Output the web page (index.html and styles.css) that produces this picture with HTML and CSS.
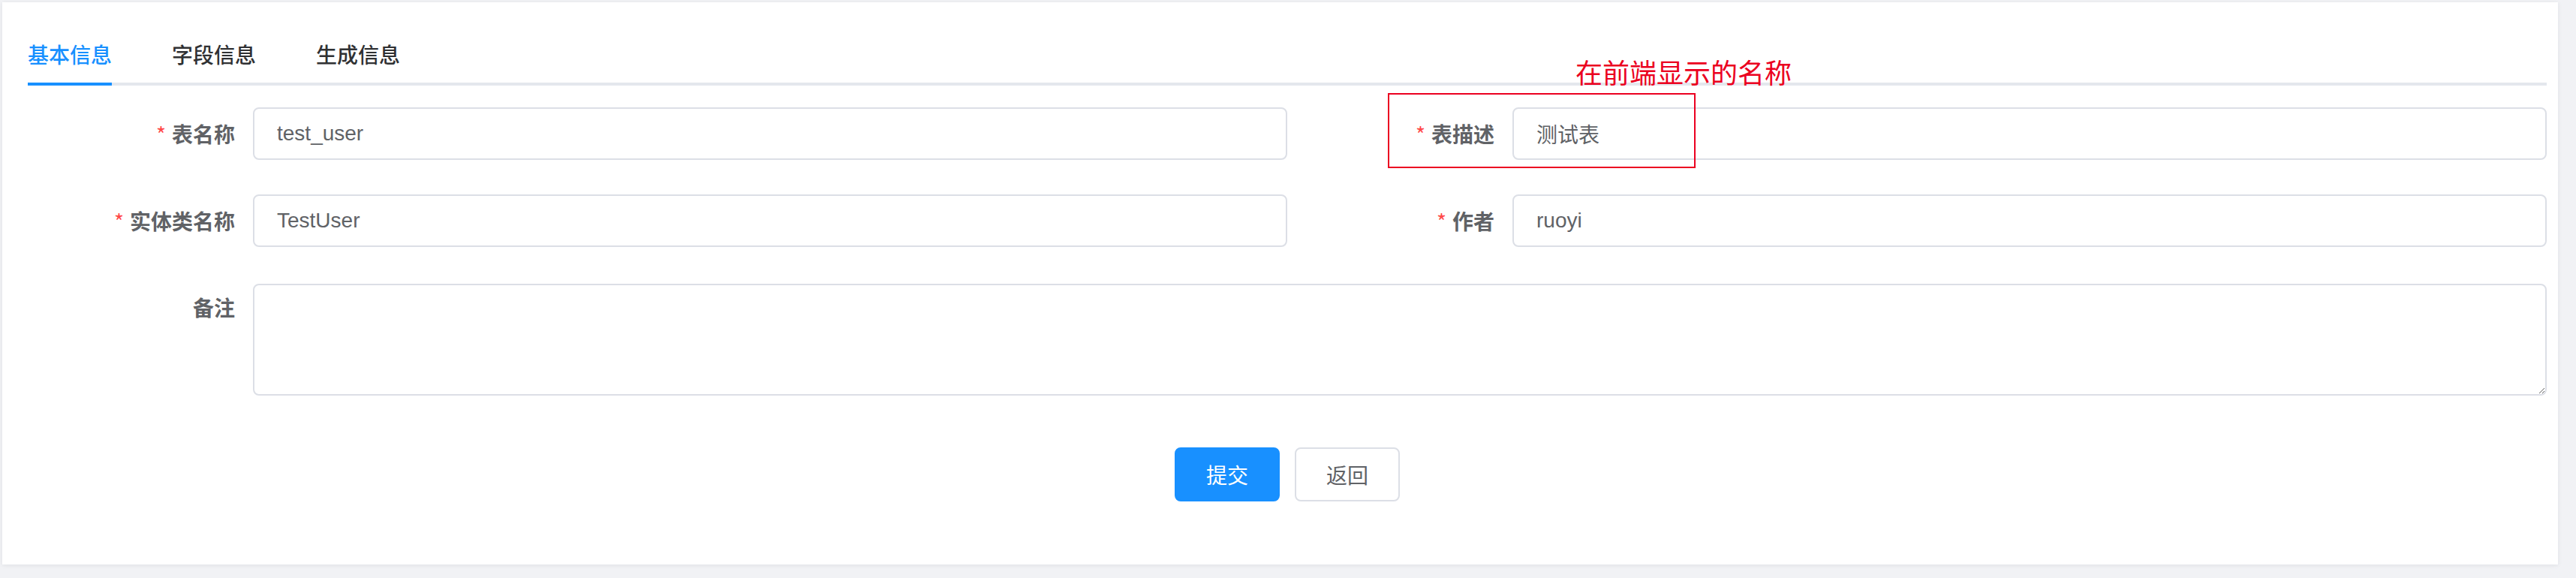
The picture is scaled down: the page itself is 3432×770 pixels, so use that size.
FILE: index.html
```html
<!DOCTYPE html>
<html lang="zh-CN">
<head>
<meta charset="utf-8">
<title>修改生成配置</title>
<link rel="stylesheet" href="styles.css">
</head>
<body>
<div class="page">
  <div class="card">
    <div class="tabs">
      <div class="tab active"><span class="tab-text">基本信息</span></div>
      <div class="tab"><span class="tab-text">字段信息</span></div>
      <div class="tab"><span class="tab-text">生成信息</span></div>
    </div>
    <form class="form">
      <div class="row">
        <div class="item">
          <label class="label"><span class="req">*</span>表名称</label>
          <div class="control"><input class="input" type="text" value="test_user"></div>
        </div>
        <div class="item annotated">
          <label class="label"><span class="req">*</span>表描述</label>
          <div class="control"><input class="input" type="text" value="测试表"></div>
          <div class="note-box"></div>
          <div class="note-text">在前端显示的名称</div>
        </div>
      </div>
      <div class="row">
        <div class="item">
          <label class="label"><span class="req">*</span>实体类名称</label>
          <div class="control"><input class="input" type="text" value="TestUser"></div>
        </div>
        <div class="item">
          <label class="label"><span class="req">*</span>作者</label>
          <div class="control"><input class="input" type="text" value="ruoyi"></div>
        </div>
      </div>
      <div class="item remark">
        <label class="label">备注</label>
        <div class="control"><textarea class="textarea"></textarea></div>
      </div>
    </form>
    <div class="actions">
      <button class="btn primary" type="button">提交</button>
      <button class="btn" type="button">返回</button>
    </div>
  </div>
</div>
</body>
</html>
```
FILE: styles.css
```css
* { box-sizing: border-box; }
html, body {
  margin: 0;
  padding: 0;
  background: #eef0f3;
  font-family: "Liberation Sans", "Noto Sans CJK SC", sans-serif;
}
.page {
  width: 3432px;
  height: 770px;
  padding: 3px 24px 0 3px;
  background: #f1f2f5;
}
.card {
  background: #ffffff;
  width: 3405px;
  height: 749px;
  padding: 31px 15px 0 34px;
  box-shadow: 0 1px 6px rgba(0, 21, 41, 0.08);
}
.tabs {
  display: flex;
  height: 80px;
  border-bottom: 4px solid #e4e7ed;
}
.tab {
  height: 80px;
  padding: 0 40px;
  font-size: 28px;
  font-weight: 500;
  color: #303133;
  font-family: "Noto Sans CJK SC", sans-serif;
  margin-bottom: -4px;
  display: flex;
}
.tab:first-child { padding-left: 0; }
.tab-text {
  display: block;
  height: 80px;
  line-height: 76px;
  border-bottom: 4px solid transparent;
}
.tab.active { color: #1890ff; }
.tab.active .tab-text { border-bottom-color: #1890ff; }
.form {
  margin: 29px 0 0 0;
}
.row {
  display: grid;
  grid-template-columns: 1fr 1fr;
}
.item {
  display: flex;
  align-items: flex-start;
  height: 70px;
  margin-bottom: 46px;
  position: relative;
}
.row + .row .item { margin-bottom: 49px; }
.label {
  display: block;
  width: 300px;
  height: 70px;
  flex: none;
  text-align: right;
  padding-right: 24px;
  line-height: 70px;
  font-size: 28px;
  font-weight: 700;
  color: #606266;
  font-family: "Noto Sans CJK SC", sans-serif;
}
.req {
  color: #ff4949;
  margin-right: 8px;
  font-weight: 400;
  font-family: "Noto Sans CJK SC", sans-serif;
}
.control {
  flex: 1;
  min-width: 0;
}
.input {
  display: block;
  width: 100%;
  height: 70px;
  border: 2px solid #dcdfe6;
  border-radius: 8px;
  padding: 0 30px;
  font-size: 28px;
  color: #606266;
  font-family: "Liberation Sans", "Noto Sans CJK SC", sans-serif;
  background: #fff;
  outline: none;
}
.remark {
  height: 149px;
  margin-bottom: 0;
}
.remark .label {
  height: 62px;
  line-height: 62px;
}
.textarea {
  display: block;
  width: 100%;
  height: 149px;
  border: 2px solid #dcdfe6;
  border-radius: 8px;
  padding: 10px 30px;
  font-size: 28px;
  color: #606266;
  font-family: "Liberation Sans", "Noto Sans CJK SC", sans-serif;
  background: #fff;
  outline: none;
  resize: vertical;
}
.note-box {
  position: absolute;
  left: 134px;
  top: -19px;
  width: 410px;
  height: 100px;
  border: 2px solid #eb0020;
  pointer-events: none;
}
.note-text {
  position: absolute;
  left: 384px;
  top: -68px;
  font-size: 36px;
  line-height: 40px;
  color: #eb0020;
  font-family: "Noto Sans CJK SC", sans-serif;
  white-space: nowrap;
}
.actions {
  display: flex;
  justify-content: center;
  gap: 20px;
  margin-top: 69px;
}
.btn {
  width: 140px;
  height: 72px;
  border: 2px solid #dcdfe6;
  border-radius: 8px;
  background: #fff;
  color: #606266;
  font-size: 28px;
  font-family: "Noto Sans CJK SC", sans-serif;
  padding: 0;
}
.btn.primary {
  background: #1890ff;
  border-color: #1890ff;
  color: #fff;
}
```
